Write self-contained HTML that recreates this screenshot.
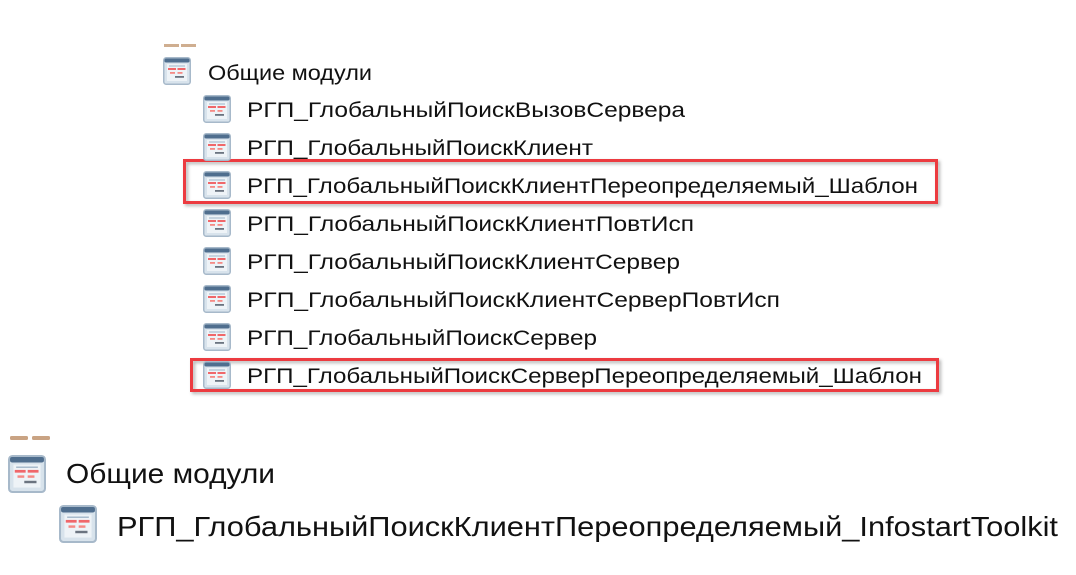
<!DOCTYPE html>
<html><head><meta charset="utf-8">
<style>
html,body{margin:0;padding:0;background:#fff;}
svg{display:block;}
text{font-family:"Liberation Sans",Arial,sans-serif;fill:#111;}
</style></head>
<body>
<svg width="1076" height="575" viewBox="0 0 1076 575" xmlns="http://www.w3.org/2000/svg">
<defs>
<symbol id="ic" viewBox="0 0 28 28">
<rect x="0.75" y="0.75" width="26.5" height="26.5" rx="2.5" fill="#d8e3ec" stroke="#a7b9ca" stroke-width="1.5"/>
<rect x="1.5" y="1.5" width="25" height="4" rx="1.5" fill="#4f6e8e"/>
<rect x="4" y="7" width="20" height="17" fill="#eef3f7"/>
<rect x="6" y="8.5" width="16" height="1" fill="#9fb4c8"/>
<rect x="5" y="11" width="8" height="2" fill="#f0676a"/>
<rect x="14.5" y="11" width="8" height="2" fill="#f0676a"/>
<rect x="7" y="15" width="5" height="1.8" fill="#f58a85"/>
<rect x="14.5" y="15" width="5" height="1.8" fill="#f58a85"/>
<rect x="12" y="19" width="9" height="1.8" fill="#6b7480"/>
</symbol>
<filter id="sh" x="-5%" y="-30%" width="110%" height="160%">
<feDropShadow dx="2" dy="2" stdDeviation="1.5" flood-color="#000" flood-opacity="0.3"/>
</filter>
</defs>

<rect x="164" y="44" width="15" height="3" fill="#cfae90"/>
<rect x="181" y="44" width="15" height="3" fill="#cfae90"/>

<use href="#ic" x="163" y="57" width="28" height="28"/>
<text x="208" y="80" font-size="21" textLength="164" lengthAdjust="spacingAndGlyphs">Общие модули</text>

<rect x="184.5" y="160.5" width="752" height="42" fill="none" stroke="#ec3b40" stroke-width="3" filter="url(#sh)"/>
<rect x="191.5" y="359.5" width="746" height="31" fill="none" stroke="#ec3b40" stroke-width="3" filter="url(#sh)"/>

<use href="#ic" x="203" y="95" width="28" height="28"/>
<text x="247" y="117" font-size="21" textLength="438" lengthAdjust="spacingAndGlyphs">РГП_ГлобальныйПоискВызовСервера</text>
<use href="#ic" x="203" y="133" width="28" height="28"/>
<text x="247" y="155" font-size="21" textLength="346" lengthAdjust="spacingAndGlyphs">РГП_ГлобальныйПоискКлиент</text>
<use href="#ic" x="203" y="171" width="28" height="28"/>
<text x="247" y="193" font-size="21" textLength="671" lengthAdjust="spacingAndGlyphs">РГП_ГлобальныйПоискКлиентПереопределяемый_Шаблон</text>
<use href="#ic" x="203" y="209" width="28" height="28"/>
<text x="247" y="231" font-size="21" textLength="447" lengthAdjust="spacingAndGlyphs">РГП_ГлобальныйПоискКлиентПовтИсп</text>
<use href="#ic" x="203" y="247" width="28" height="28"/>
<text x="247" y="269" font-size="21" textLength="433" lengthAdjust="spacingAndGlyphs">РГП_ГлобальныйПоискКлиентСервер</text>
<use href="#ic" x="203" y="285" width="28" height="28"/>
<text x="247" y="307" font-size="21" textLength="533" lengthAdjust="spacingAndGlyphs">РГП_ГлобальныйПоискКлиентСерверПовтИсп</text>
<use href="#ic" x="203" y="323" width="28" height="28"/>
<text x="247" y="345" font-size="21" textLength="350" lengthAdjust="spacingAndGlyphs">РГП_ГлобальныйПоискСервер</text>
<use href="#ic" x="203" y="361" width="28" height="28"/>
<text x="247" y="383" font-size="21" textLength="675" lengthAdjust="spacingAndGlyphs">РГП_ГлобальныйПоискСерверПереопределяемый_Шаблон</text>

<rect x="10" y="436" width="18" height="4" rx="1.5" fill="#c9a383"/>
<rect x="32" y="436" width="18" height="4" rx="1.5" fill="#c9a383"/>

<use href="#ic" x="7" y="455" width="40" height="38"/>
<text x="66" y="483" font-size="28" textLength="209" lengthAdjust="spacingAndGlyphs">Общие модули</text>
<use href="#ic" x="58" y="505" width="40" height="38"/>
<text x="117" y="536" font-size="28" textLength="941" lengthAdjust="spacingAndGlyphs">РГП_ГлобальныйПоискКлиентПереопределяемый_InfostartToolkit</text>
</svg>
</body></html>
